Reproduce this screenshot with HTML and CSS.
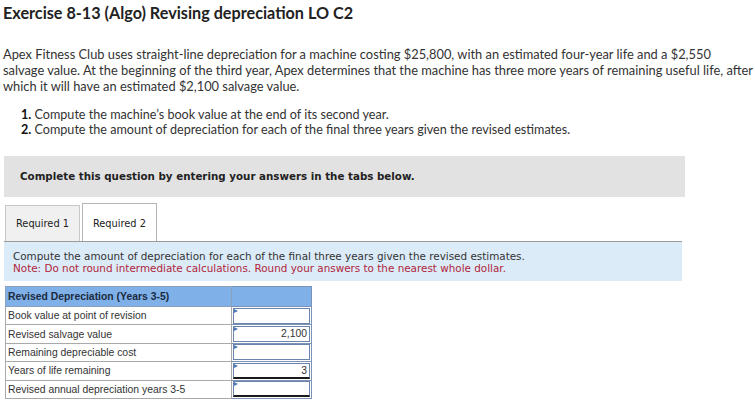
FILE: index.html
```html
<!DOCTYPE html>
<html>
<head>
<meta charset="utf-8">
<link rel="stylesheet" href="styles.css">
</head>
<body>
<h1 class="title">Exercise 8-13 (Algo) Revising depreciation LO C2</h1>
<p class="intro">Apex Fitness Club uses straight-line depreciation for a machine costing $25,800, with an estimated four-year life and a $2,550<br>salvage value. At the beginning of the third year, Apex determines that the machine has three more years of remaining useful life, after<br>which it will have an estimated $2,100 salvage value.</p>
<ol class="tasks">
  <li><b>1.</b> Compute the machine’s book value at the end of its second year.</li>
  <li><b>2.</b> Compute the amount of depreciation for each of the final three years given the revised estimates.</li>
</ol>
<div class="notice">Complete this question by entering your answers in the tabs below.</div>
<div class="tabs">
  <div class="tab">Required 1</div>
  <div class="tab active">Required 2</div>
</div>
<div class="panel">
  <div>Compute the amount of depreciation for each of the final three years given the revised estimates.</div>
  <div class="note">Note: Do not round intermediate calculations. Round your answers to the nearest whole dollar.</div>
</div>
<table class="grid">
  <tr class="head"><td>Revised Depreciation (Years 3-5)</td><td class="val"></td></tr>
  <tr><td>Book value at point of revision</td><td class="val"><div class="inp"></div></td></tr>
  <tr><td>Revised salvage value</td><td class="val"><div class="inp">2,100</div></td></tr>
  <tr><td>Remaining depreciable cost</td><td class="val"><div class="inp"></div></td></tr>
  <tr><td>Years of life remaining</td><td class="val"><div class="inp under">3</div></td></tr>
  <tr><td>Revised annual depreciation years 3-5</td><td class="val"><div class="inp under"></div></td></tr>
</table>
</body>
</html>
```
FILE: styles.css
```css
html, body { margin: 0; padding: 0; background: #fff; }
body { padding: 0 3px; color: #222; font-family: Lato, "Open Sans", sans-serif; }
.title { margin: 4px 0 0; font-size: 16.2px; font-weight: 700; color: #222; line-height: 18px; }
.intro { margin: 24px 0 0; font-size: 12.85px; line-height: 16px; color: #333; width: 760px; white-space: nowrap; }
.tasks { list-style: none; margin: 13px 0 0; padding: 0 0 0 18px; font-size: 12.6px; line-height: 15px; color: #333; }
.tasks b { font-weight: 700; color: #111; }
.notice { margin: 19px 0 0 1px; width: 665px; height: 41px; padding-left: 16px; background: #e2e2e2; box-sizing: content-box;
  font-family: "DejaVu Sans", Verdana, sans-serif; font-size: 10.3px; font-weight: 700; color: #222; line-height: 40px; }
.tabs { display: flex; align-items: flex-end; margin: 6px 0 0 2px; height: 38px; gap: 2px; }
.tab { font-family: "DejaVu Sans", Verdana, sans-serif; font-size: 9.8px; color: #222; border: 1px solid #c8c8c8; border-bottom: none;
  background: #f0f0f0; height: 36px; line-height: 36px; padding: 0 10px; box-sizing: border-box; }
.tab.active { background: #fff; height: 38px; line-height: 40px; border-color: #b5b5b5; }
.panel { margin-left: 1px; width: 669px; padding: 8px 0 7px 9px; background: #dcebf8; border-top: 1px solid #9a9a9a;
  font-family: "DejaVu Sans", Verdana, sans-serif; font-size: 10.4px; line-height: 12px; color: #333; }
.panel .note { color: #b0263a; }
.grid { margin: 5px 0 0 2px; border-collapse: collapse; font-family: "Liberation Sans", Arial, sans-serif; font-size: 10.4px; color: #333; }
.grid td { border: 1px solid #a9a9a9; padding: 0 2px; box-sizing: border-box; }
.grid tr td { height: 18.4px; }
.grid .head td { height: 20px; }
.grid td:first-child { width: 226px; }
.grid .head td { background: #7fb1e8; font-weight: 700; color: #1b2a40; border-color: #8aa0bb; }
.grid td.val { width: 80px; padding: 0; border-color: #7b93b6; }
.grid .head td.val { border-left: 1px solid #8aa0bb; }
.inp { position: relative; height: 16px; margin: 0 1px; border: 1px solid #6b84ad; box-sizing: border-box; background: #fff; text-align: right; padding-right: 2px; line-height: 14px; font-size: 10.4px; }
.inp::before { content: ""; position: absolute; left: 0; top: 0; border-style: solid; border-width: 2px 0 2px 4px; border-color: transparent transparent transparent #4a78b6; }
.inp.under { border-bottom: 2px solid #1a1a1a; }
```
